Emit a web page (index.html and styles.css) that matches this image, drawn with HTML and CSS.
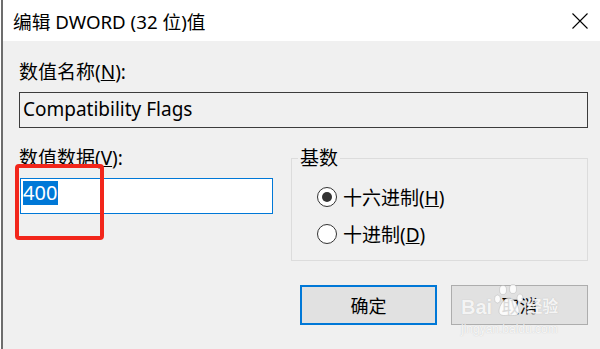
FILE: index.html
```html
<html>
    <head>
        <link rel="stylesheet" href="styles.css">
    </head>
    <body>
        <div class="window">
            <div class="titlebar">
                <div class="title">编辑 DWORD (32 位)值</div>
                <svg class="close" width="16" height="16" viewBox="0 0 16 16">
                    <path d="M0.5 0.5 L15.5 15.5 M15.5 0.5 L0.5 15.5" stroke="#000" stroke-width="1.1" fill="none"/>
                </svg>
            </div>
            <div class="content">
                <div class="label">数值名称(<u>N</u>):</div>
                <div class="box readonly">Compatibility Flags</div>
                <div class="row">
                    <div class="col-left">
                        <div class="label">数值数据(<u>V</u>):</div>
                        <div class="box edit"><span class="selected">400</span></div>
                    </div>
                    <fieldset class="group">
                        <legend>基数</legend>
                        <div class="radio-row">
                            <span class="radio checked"></span>
                            <span>十六进制(<u>H</u>)</span>
                        </div>
                        <div class="radio-row">
                            <span class="radio"></span>
                            <span>十进制(<u>D</u>)</span>
                        </div>
                    </fieldset>
                </div>
                <div class="buttons">
                    <div class="button default">确定</div>
                    <div class="button">取消</div>
                </div>
            </div>
            <div class="mark"></div>
            <div class="watermark">
                <div class="wm-top">
                    <span class="wm-bai">Bai</span>
                    <svg class="paw" width="30" height="34" viewBox="0 0 30 34">
                        <g fill="rgba(255,255,255,0.85)" stroke="rgba(160,160,160,0.35)" stroke-width="1">
                            <ellipse cx="9" cy="6" rx="3.5" ry="4.5"/>
                            <ellipse cx="19" cy="5" rx="3.5" ry="4.5"/>
                            <ellipse cx="3.5" cy="15" rx="3" ry="4"/>
                            <ellipse cx="26" cy="14" rx="3" ry="4"/>
                            <path d="M15 14 C10 14 5 22 5 27 C5 32 10 32 15 31 C20 32 25 32 25 27 C25 22 20 14 15 14 Z"/>
                        </g>
                    </svg>
                    <span class="wm-cn">经验</span>
                </div>
                <div class="wm-url">jingyan.baidu.com</div>
            </div>
        </div>
    </body>
</html>
```

FILE: styles.css
```css
body {
    margin: 0;
    background: #fff;
    font-family: "Noto Sans", "Noto Sans CJK SC", sans-serif;
    color: #000;
}
.window {
    position: relative;
    margin-left: 1px;
    border-left: 2px solid #6d6d6d;
    height: 349px;
    overflow: hidden;
}
.titlebar {
    height: 41px;
    background: #fff;
    display: flex;
    align-items: center;
    justify-content: space-between;
    padding: 0 12px 0 10px;
}
.title {
    font-size: 18.7px;
}
.content {
    background: #f0f0f0;
    height: 308px;
    padding: 19px 12px 0 16px;
    box-sizing: border-box;
    font-size: 19px;
}
.label {
    line-height: 24px;
}
.box {
    height: 36px;
    box-sizing: border-box;
}
.readonly {
    margin-top: 8px;
    border: 1px solid #3c3c3c;
    background: #f0f0f0;
    padding-left: 3px;
    line-height: 32px;
    font-size: 19px;
}
.row {
    display: flex;
    gap: 18px;
    margin-top: 18px;
}
.col-left {
    width: 254px;
}
.edit {
    margin-top: 8px;
    margin-left: 1px;
    border: 1px solid #0078d7;
    background: #fff;
    padding: 2px 0 0 2px;
    font-size: 20px;
}
.selected {
    display: inline-block;
    background: #0078d7;
    color: #fff;
    line-height: 24px;
    padding-right: 1px;
}
.group {
    margin: 0;
    padding: 8px 0 8px 0;
    width: 297px;
    box-sizing: border-box;
    border: 1px solid #dcdcdc;
    min-width: 0;
}
.group legend {
    margin-left: 6px;
    padding: 0 2px;
    line-height: 24px;
}
.radio-row {
    height: 37px;
    display: flex;
    align-items: center;
    gap: 6px;
    padding-left: 25px;
}
.radio {
    width: 20px;
    height: 20px;
    box-sizing: border-box;
    border: 1px solid #333;
    border-radius: 50%;
    background: #fff;
    display: flex;
    align-items: center;
    justify-content: center;
}
.radio.checked::after {
    content: "";
    width: 10px;
    height: 10px;
    border-radius: 50%;
    background: #333;
}
.buttons {
    display: flex;
    justify-content: flex-end;
    gap: 14px;
    margin-top: 24px;
}
.button {
    width: 137px;
    height: 40px;
    box-sizing: border-box;
    border: 1px solid #adadad;
    background: #e1e1e1;
    display: flex;
    align-items: center;
    justify-content: center;
    font-size: 18px;
}
.button.default {
    border: 2px solid #0078d7;
}
.mark {
    position: absolute;
    left: 12px;
    top: 164px;
    width: 89px;
    height: 76px;
    box-sizing: border-box;
    border: 4px solid #f2261b;
    border-radius: 4px;
}
.watermark {
    position: absolute;
    left: 458px;
    top: 282px;
    color: rgba(255, 255, 255, 0.85);
    text-shadow: 0 0 1px rgba(150, 150, 150, 0.5);
    font-family: "Liberation Sans", "Noto Sans CJK SC", sans-serif;
}
.wm-top {
    display: flex;
    align-items: flex-end;
    height: 36px;
}
.wm-bai {
    font-size: 20px;
    font-weight: bold;
    line-height: 22px;
}
.paw {
    margin: 0 2px 0 2px;
}
.wm-cn {
    font-size: 16px;
    font-weight: bold;
    line-height: 22px;
}
.wm-url {
    font-size: 12px;
    line-height: 14px;
    margin-top: 4px;
}
```
